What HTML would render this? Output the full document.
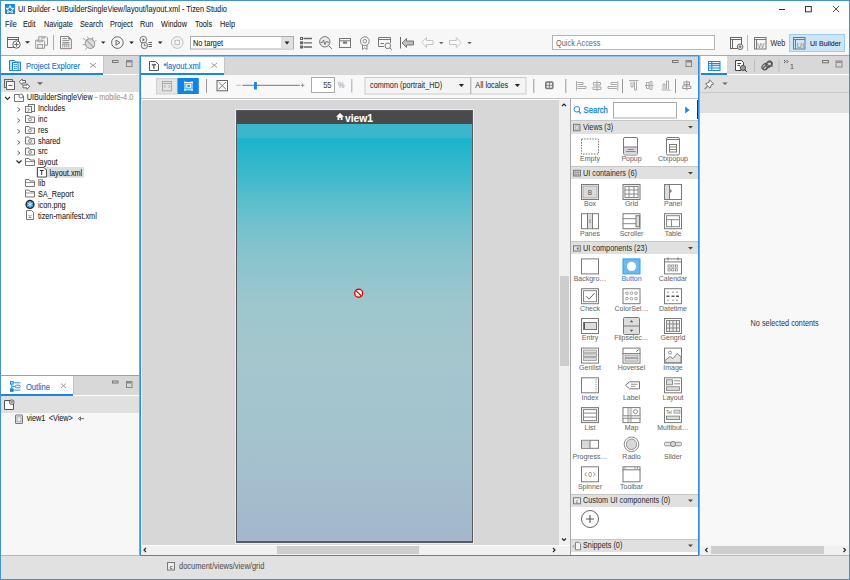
<!DOCTYPE html>
<html><head><meta charset="utf-8">
<style>
html,body{margin:0;padding:0;}
body{width:850px;height:580px;overflow:hidden;position:relative;background:#fff;font-family:"Liberation Sans",sans-serif;font-size:7.3px;color:#222;}
.a{position:absolute;}
.t{position:absolute;white-space:nowrap;line-height:1;z-index:5;-webkit-text-stroke:0.06px currentColor;transform:scaleY(1.14);transform-origin:0 84.6%;}
svg{position:absolute;overflow:visible;}
</style></head><body>
<!-- window border -->
<div class="a" style="left:0;top:0;width:850px;height:580px;box-sizing:border-box;border:1px solid #4592d3;z-index:50;pointer-events:none"></div>

<!-- title bar -->
<svg style="left:0;top:0" width="850" height="56">
<rect x="5" y="4" width="10" height="10" fill="#1e88e5"/>
<path d="M10 5.6 L11.1 8.3 L13.9 8.4 L11.7 10.2 L12.5 12.8 L10 11.3 L7.5 12.8 L8.3 10.2 L6.1 8.4 L8.9 8.3 Z" fill="none" stroke="#fff" stroke-width="1"/>
<!-- window controls -->
<rect x="779" y="9" width="6" height="1" fill="#333"/>
<rect x="805.5" y="6.5" width="5.8" height="5.3" fill="none" stroke="#333" stroke-width="1"/>
<path d="M833 6 L839.2 12 M839.2 6 L833 12" stroke="#333" stroke-width="0.9"/>
<!-- toolbar icons -->
<g fill="none" stroke="#666" stroke-width="1">
 <rect x="7.5" y="37.5" width="11" height="10"/>
 <line x1="7.5" y1="39.5" x2="18.5" y2="39.5"/>
 <circle cx="16.5" cy="44.5" r="3.7" fill="#f7f7f7"/>
 <path d="M16.5 42.3 V46.7 M14.3 44.5 H18.7" stroke-width="0.9"/>
</g>
<path d="M25 41.2 H30 L27.5 43.6 Z" fill="#222"/>
<g fill="#f7f7f7" stroke="#999" stroke-width="1">
 <path d="M38.7 36.8 H46.5 L47.5 37.8 V45.3 H38.7 Z"/>
 <rect x="41" y="36.8" width="4.5" height="2" fill="#bbb" stroke="none"/>
 <path d="M35.7 40.2 H43.5 L44.6 41.3 V48.3 H35.7 Z" fill="#fafafa"/>
 <path d="M37.7 40.2 V41.8 H42.5 V40.2" fill="none"/>
 <rect x="37.7" y="44.5" width="5" height="3.8" fill="#eee"/>
</g>
<rect x="53" y="35" width="1" height="15" fill="#aaa"/>
<g fill="#fafafa" stroke="#808080" stroke-width="1">
 <path d="M60.5 36.5 H68.5 L71.3 39.3 V48.7 H60.5 Z"/>
 <path d="M68.3 36.5 V39.5 H71.3" fill="#777" stroke="none"/>
 <path d="M62.3 38.6 H67 M62.3 40.6 H69.5 M62.3 42.6 H69.5" stroke-width="0.9"/>
 <path d="M62.8 44 V47.5 M64.8 44.5 V47.5 M66.8 44.5 V47.5 M68.8 44 V47.5 M62.8 44 H68.8" stroke-width="0.9"/>
</g>
<g stroke="#9a9a9a" stroke-width="1" fill="none">
 <ellipse cx="90" cy="43.6" rx="4.6" ry="5" fill="#dcdcdc" transform="rotate(-35 90 43.6)"/>
 <path d="M86.5 40 L93.5 47.2" stroke="#888"/>
 <path d="M85.5 40 L83 38.3 M85 44.5 L82.5 44.8 M87 47.8 L85.3 49.8 M92.5 39 L93 37 M94.3 41.5 L96.5 40.5 M88.5 38.8 L87.5 36.5" stroke="#aaa"/>
</g>
<path d="M101 41.4 H105.5 L103.25 43.8 Z" fill="#222"/>
<g fill="none" stroke="#666" stroke-width="1">
 <circle cx="117.4" cy="42.6" r="5.8"/>
 <path d="M116 40 L120 42.6 L116 45.2 Z"/>
</g>
<path d="M129.2 41.4 H133.9 L131.55 43.9 Z" fill="#222"/>
<g fill="none" stroke="#777" stroke-width="1">
 <circle cx="143.3" cy="39.7" r="3.4" fill="#f7f7f7"/>
 <circle cx="144.4" cy="45.5" r="3.2" fill="#ececec"/>
 <path d="M148.5 42.5 H152 M148.5 44.5 H152 M148.5 46.5 H152" stroke="#666"/>
 <path d="M144.4 45.5 V43.5 M144.4 45.5 H146.2" stroke="#666" stroke-width="0.8"/>
</g>
<path d="M142.5 38 L145 39.7 L142.5 41.4 Z" fill="#666"/>
<path d="M157.9 41.4 H162.4 L160.15 43.9 Z" fill="#222"/>
<g fill="none" stroke="#bbb" stroke-width="1">
 <circle cx="177.2" cy="42.5" r="5.8"/>
 <rect x="175" y="40.3" width="4.4" height="4.4"/>
</g>
<!-- combo no target -->
<rect x="190.5" y="36.5" width="103" height="12.5" fill="#fff" stroke="#adadad"/>
<rect x="281" y="37" width="12" height="11.5" fill="#e1e1e1"/>
<path d="M284.5 41.5 H289.5 L287 44.5 Z" fill="#222"/>
<g fill="none" stroke="#666" stroke-width="1">
 <rect x="300.5" y="37.5" width="2" height="2"/><rect x="300.5" y="41.8" width="2" height="2"/><rect x="300.5" y="46" width="2" height="2"/>
</g>
<g fill="none" stroke="#666" stroke-width="1.3">
 <path d="M303.5 38.5 H312 M303.5 42.8 H312 M303.5 47 H312"/>
</g>
<g fill="none" stroke="#777" stroke-width="1">
 <circle cx="324.8" cy="41.8" r="5.2" fill="#eaeaea"/>
 <path d="M328.5 45.5 L332 49"/>
 <path d="M320.5 42.5 L322.5 42.5 L323.5 40 L325 44.5 L326.2 41.5 L329 42.5"/>
</g>
<g fill="none" stroke="#777" stroke-width="1">
 <rect x="339.5" y="38.5" width="11" height="9"/>
 <path d="M339.5 40.8 H350.5"/>
 <rect x="343.5" y="42" width="3" height="1.2" fill="#777"/>
</g>
<g fill="none" stroke="#888" stroke-width="1">
 <circle cx="364.8" cy="41.2" r="4.4"/>
 <circle cx="364.8" cy="41.2" r="1.8"/>
 <path d="M362.5 45 V49.5 L364.8 47.8 L367 49.5 V45"/>
</g>
<g fill="none" stroke="#777" stroke-width="1">
 <path d="M384 46.5 H378.5 V37.5 H390.5 V43"/>
 <path d="M378.5 39.5 H390.5 M380.5 43.5 H384"/>
 <circle cx="387.8" cy="45.8" r="2.8" fill="#f7f7f7"/>
 <path d="M389.8 47.8 L391.8 49.8"/>
</g>
<rect x="400" y="37" width="1" height="11.5" fill="#666"/>
<path d="M402 43 L406.5 38.5 V41 H413.5 V45 H406.5 V47.5 Z" fill="#bdbdbd" stroke="#777" stroke-width="1"/>
<path d="M421.8 42.5 L426.5 37.5 V40.5 H433 V44.5 H426.5 V47.5 Z" fill="#fafafa" stroke="#c4c4c4" stroke-width="1"/>
<path d="M439 42 H443.5 L441.25 44.2 Z" fill="#666"/>
<path d="M461 42.5 L456.3 37.5 V40.5 H449.5 V44.5 H456.3 V47.5 Z" fill="#fafafa" stroke="#c4c4c4" stroke-width="1"/>
<path d="M467.2 42 H471.8 L469.5 44.2 Z" fill="#666"/>
<!-- quick access -->
<rect x="552.5" y="35.5" width="162" height="14" fill="#fff" stroke="#b4b4b4"/>
<g fill="none" stroke="#666" stroke-width="1">
 <rect x="730.5" y="37.5" width="11" height="11"/>
 <path d="M730.5 39.5 H741.5 M732.5 39.5 V48.5"/>
 <circle cx="740.1" cy="46.8" r="2.8" fill="#f7f7f7"/>
 <path d="M740.1 45.2 V48.4 M738.5 46.8 H741.7"/>
</g>
<rect x="747" y="35" width="1" height="16" fill="#bbb"/>
<g fill="none" stroke="#777" stroke-width="1">
 <rect x="754.5" y="37.5" width="11.5" height="11.5"/>
 <path d="M754.5 39.5 H766 M756.5 39.5 V49"/>
</g>
<text x="757.3" y="48" font-family="Liberation Sans" font-size="7.6" fill="#888">W</text>
<rect x="789.5" y="34.5" width="55" height="17" fill="#cde6f7" stroke="#9fcdf0"/>
<g fill="none" stroke="#777" stroke-width="1">
 <rect x="793.5" y="37.5" width="11.5" height="11.5"/>
 <path d="M793.5 39.5 H805 M795.5 39.5 V49"/>
</g>
<text x="796.8" y="48" font-family="Liberation Sans" font-size="7.4" fill="#888">UI</text>
</svg>
<div class="t" style="left:18px;top:6.2px;font-size:7.35px;color:#222">UI Builder - UIBuilderSingleView/layout/layout.xml - Tizen Studio</div>

<!-- menu -->
<div class="t" style="left:5px;top:20.5px">File</div>
<div class="t" style="left:23px;top:20.5px">Edit</div>
<div class="t" style="left:44px;top:20.5px">Navigate</div>
<div class="t" style="left:80px;top:20.5px">Search</div>
<div class="t" style="left:110px;top:20.5px">Project</div>
<div class="t" style="left:140px;top:20.5px">Run</div>
<div class="t" style="left:161px;top:20.5px">Window</div>
<div class="t" style="left:195px;top:20.5px">Tools</div>
<div class="t" style="left:220px;top:20.5px">Help</div>

<!-- toolbar -->
<div class="a" style="left:1px;top:29px;width:848px;height:26px;background:#f7f7f7;z-index:-1"></div>
<div class="a" style="left:1px;top:55px;width:848px;height:1px;background:#a9a9a9"></div>
<div class="t" style="left:193px;top:39.5px;color:#222">No target</div>
<div class="t" style="left:556px;top:39.5px;font-size:7.4px;color:#666;-webkit-text-stroke:0">Quick Access</div>
<div class="t" style="left:770.5px;top:40px;font-size:7.2px;color:#333;-webkit-text-stroke:0.05px #333">Web</div>
<div class="t" style="left:810px;top:40px;font-size:7.05px;color:#222244;-webkit-text-stroke:0.1px #224">UI Builder</div>

<!-- left panel: project explorer -->
<div class="a" style="left:1px;top:56px;width:138px;height:18px;background:#d8d8d8"></div>
<div class="a" style="left:1px;top:56px;width:102px;height:18px;background:#fff"></div>
<div class="a" style="left:1px;top:73px;width:102px;height:2px;background:#1a86dc"></div>
<div class="a" style="left:1px;top:75px;width:138px;height:17px;background:#e0e0e0"></div>
<div class="a" style="left:1px;top:92px;width:138px;height:283px;background:#fff"></div>
<div class="a" style="left:139px;top:56px;width:1px;height:499px;background:#a0a0a0"></div>
<div class="a" style="left:1px;top:375px;width:138px;height:1px;background:#a0a0a0"></div>

<!-- explorer details -->
<svg style="left:0;top:0;z-index:2" width="140" height="556">
<g fill="#fff" stroke="#1a86dc" stroke-width="1">
 <path d="M9.5 60.5 H14.5 L15.5 62 H20.5 V70.5 H9.5 Z" fill="#bcdcf7"/>
 <path d="M12.5 62.5 H18 V70.5 H12.5 Z" fill="#fff"/>
 <path d="M13.5 64.5 H17 M13.5 66.5 H17 M13.5 68.5 H17" stroke-width="0.8"/>
</g>
<path d="M90 63 L96 67.5 M96 63 L90 67.5" stroke="#999" stroke-width="1"/>
<rect x="112.5" y="60.5" width="5.5" height="2" fill="none" stroke="#777" stroke-width="1"/>
<rect x="126.5" y="60.5" width="5.5" height="6" fill="none" stroke="#888" stroke-width="1"/>
<rect x="127" y="61" width="4.5" height="1.5" fill="#888"/>
<g fill="none" stroke="#666" stroke-width="1">
 <rect x="4.5" y="79.5" width="8" height="8" fill="#e0e0e0"/>
 <rect x="6.5" y="81.5" width="8" height="8" fill="#fafafa"/>
 <path d="M8.5 85.5 H12.5"/>
 <path d="M19.2 81.8 L22.2 79 V80.5 H25.5 V83 H22.2 V84.6 Z" fill="#fff" stroke="#666"/>
 <path d="M29.8 86.5 L26.8 83.7 V85.2 H23 V87.8 H26.8 V89.3 Z" fill="#fff" stroke="#666"/>
</g>
<path d="M37 82.3 H43 L40 85 Z" fill="#666"/>
<!-- tree -->
<path d="M5 96.8 L7.5 99.3 L10 96.8" fill="none" stroke="#222" stroke-width="1.2"/>
<g fill="none" stroke="#777" stroke-width="1">
 <path d="M14.5 94.5 H19 L20 96 H23.5 V101.5 H14.5 Z"/>
 <circle cx="21" cy="96" r="2" fill="#fff"/>
</g>
<g fill="none" stroke="#555" stroke-width="0.9">
 <path d="M17.5 107.5 L20 109.5 L17.5 111.5"/>
 <path d="M17.5 118.5 L20 120.5 L17.5 122.5"/>
 <path d="M17.5 129.5 L20 131.5 L17.5 133.5"/>
 <path d="M17.5 140.5 L20 142.5 L17.5 144.5"/>
 <path d="M17.5 151 L20 153 L17.5 155"/>
 <path d="M16.5 160.5 L19 163 L21.5 160.5" stroke="#222" stroke-width="1.2"/>
</g>
<g fill="#f4f4f4" stroke="#777" stroke-width="1">
 <rect x="28.5" y="104.5" width="6" height="7"/>
 <rect x="25.5" y="106.5" width="6" height="6" fill="#fff"/>
 <path d="M27.5 108 L29.5 110 L27.5 111.5" fill="none"/>
 <path d="M25.5 115.5 H29 L30 117 H34.5 V122.5 H25.5 Z"/>
 <path d="M25.5 126.5 H29 L30 128 H34.5 V133.5 H25.5 Z"/>
 <path d="M25.5 137 H29 L30 138.5 H34.5 V144 H25.5 Z"/>
 <path d="M25.5 148 H29 L30 149.5 H34.5 V155 H25.5 Z"/>
 <path d="M25.5 158.5 H29 L30 160 H34.5 V165.5 H25.5 Z" fill="#fff"/>
 <path d="M25.5 179.5 H29 L30 181 H34.5 V186.5 H25.5 Z" fill="#fff"/>
 <path d="M25.5 190 H29 L30 191.5 H34.5 V197 H25.5 Z" fill="#fff"/>
 <path d="M26.5 210.5 H31.5 L33.5 212.5 V219.5 H26.5 Z" fill="#fff"/>
</g>
<g fill="none" stroke="#777" stroke-width="0.8">
 <circle cx="30" cy="119.5" r="1.5"/><circle cx="30" cy="130.5" r="1.5"/><circle cx="30" cy="141" r="1.5"/><circle cx="30" cy="152" r="1.5"/>
 <path d="M25.5 161.5 H34.5 M25.5 182.5 H34.5 M25.5 193 H34.5"/>
 <path d="M28.5 215 L30 216.5 L31.5 215 M28.5 217.5 H31.5"/>
</g>
<rect x="36" y="167" width="48" height="10.7" fill="#dedede"/>
<g fill="#fff" stroke="#555" stroke-width="1">
 <path d="M37.5 167.5 H44 L46.5 170 V177 H37.5 Z"/>
 <path d="M39.8 170.5 H43.6 M41.7 170.5 V175" stroke="#333"/>
</g>
<circle cx="30" cy="204.4" r="4.6" fill="#222"/>
<circle cx="30" cy="204.4" r="3.3" fill="#2c8ccf"/>
<path d="M30 201.5 V207.3 M27.5 203 L32.5 205.8 M27.5 205.8 L32.5 203" stroke="#fff" stroke-width="0.8"/>
<!-- outline tab -->
<g fill="none" stroke="#1a86dc" stroke-width="0.9">
 <rect x="10.5" y="381.5" width="2.6" height="2.6" fill="#bcdcf7"/>
 <rect x="10.5" y="388.8" width="2.6" height="2.6" fill="#1a86dc"/>
 <path d="M11.8 384.1 V388.8 M13.1 382.8 H20.5 M13.1 390.1 H20.5 M11.8 386.5 H15"/>
 <rect x="15.3" y="385.2" width="5" height="2.6" rx="1.2"/>
</g>
<path d="M61 383.5 L66 388 M66 383.5 L61 388" stroke="#999" stroke-width="1"/>
<rect x="112.5" y="381" width="5.5" height="2" fill="none" stroke="#777" stroke-width="1"/>
<rect x="126.5" y="381.5" width="5.5" height="6" fill="none" stroke="#888" stroke-width="1"/>
<rect x="127" y="382" width="4.5" height="1.5" fill="#888"/>
<g fill="#fff" stroke="#555" stroke-width="1">
 <path d="M4.5 400.5 H10 M13.5 403.5 V409.5 H4.5 V400.5"/>
 <circle cx="11.8" cy="402.2" r="2.3" fill="#fff"/>
 <path d="M11.8 400.9 V403.5 M10.5 402.2 H13.1" stroke-width="0.7"/>
</g>
<g fill="#eee" stroke="#777" stroke-width="1">
 <rect x="15.5" y="415" width="7" height="8.5" rx="0.5"/>
 <rect x="17" y="416.8" width="4" height="5" fill="none" stroke="#aaa"/>
</g>
<path d="M80.5 416.8 L78.3 418.6 L80.5 420.4 Z M80.5 418.6 H84" fill="none" stroke="#555" stroke-width="0.8"/>
</svg>
<div class="t" style="left:26px;top:63.1px;font-size:7.6px;color:#1277d4;-webkit-text-stroke:0.12px #1277d4">Project Explorer</div>
<div class="t" style="left:26.7px;top:94.4px">UIBuilderSingleView<span style="color:#b09060"> - mobile-4.0</span></div>
<div class="t" style="left:38px;top:105.4px">Includes</div>
<div class="t" style="left:38px;top:116.2px">inc</div>
<div class="t" style="left:38px;top:126.9px">res</div>
<div class="t" style="left:38px;top:137.6px">shared</div>
<div class="t" style="left:38px;top:148.3px">src</div>
<div class="t" style="left:38px;top:159px">layout</div>
<div class="t" style="left:49.4px;top:169.7px">layout.xml</div>
<div class="t" style="left:38px;top:180.4px">lib</div>
<div class="t" style="left:38px;top:191.1px">SA_Report</div>
<div class="t" style="left:38px;top:201.8px">icon.png</div>
<div class="t" style="left:38px;top:212.5px">tizen-manifest.xml</div>
<div class="t" style="left:25.9px;top:384.1px;font-size:7.6px;color:#1277d4;-webkit-text-stroke:0.12px #1277d4">Outline</div>
<div class="t" style="left:26.7px;top:414.6px">view1<span style="margin-left:3.3px">&lt;View&gt;</span></div>

<!-- outline -->
<div class="a" style="left:1px;top:376px;width:138px;height:19px;background:#d8d8d8"></div>
<div class="a" style="left:1px;top:376px;width:72px;height:19px;background:#fff"></div>
<div class="a" style="left:1px;top:394px;width:72px;height:2px;background:#1a86dc"></div>
<div class="a" style="left:1px;top:396px;width:138px;height:17px;background:#e0e0e0"></div>
<div class="a" style="left:1px;top:413px;width:138px;height:142px;background:#f7f7f7"></div>

<!-- editor -->
<div class="a" style="left:140px;top:55px;width:559px;height:501px;box-sizing:border-box;border:1px solid #2a8fe0;background:#d7d7d7"></div>
<div class="a" style="left:141px;top:56px;width:557px;height:18px;background:#d8d8d8"></div>
<div class="a" style="left:141px;top:56px;width:83px;height:18px;background:#fff"></div>
<div class="a" style="left:141px;top:73px;width:83px;height:2px;background:#1a86dc"></div>
<div class="a" style="left:141px;top:75px;width:557px;height:23px;background:#f8f8f8"></div>
<div class="a" style="left:141px;top:98px;width:557px;height:1px;background:#c4c4c4"></div>
<div class="a" style="left:141px;top:99px;width:557px;height:1px;background:#fff"></div>
<div class="a" style="left:140px;top:55px;width:559px;height:1px;background:#5f8db0"></div>
<div class="a" style="left:141px;top:56px;width:557px;height:1px;background:#8ac2ee"></div>
<div class="a" style="left:224px;top:57px;width:1px;height:16px;background:#c4c4c4"></div>
<div class="a" style="left:103px;top:56px;width:1px;height:17px;background:#c4c4c4"></div>
<div class="a" style="left:73px;top:376px;width:1px;height:18px;background:#c4c4c4"></div>
<div class="a" style="left:727px;top:56px;width:1px;height:17px;background:#c4c4c4"></div>
<!-- canvas scrollbars -->
<div class="a" style="left:141px;top:99px;width:1px;height:446px;background:#fafafa"></div>
<div class="a" style="left:559px;top:100px;width:11px;height:446px;background:#f0f0f0"></div>
<div class="a" style="left:560px;top:276px;width:9px;height:90px;background:#cdcdcd"></div>
<div class="a" style="left:141px;top:545px;width:429px;height:10px;background:#f0f0f0;border-top:1px solid #fff;box-sizing:border-box"></div>
<div class="a" style="left:277px;top:546px;width:142px;height:8px;background:#cdcdcd"></div>

<!-- phone -->
<div class="a" style="left:235px;top:109px;width:239px;height:435px;background:#ececec"></div>
<div class="a" style="left:236px;top:110px;width:237px;height:433px;background:#575a60"></div>
<div class="a" style="left:237px;top:111px;width:235px;height:13px;background:#4a4a4a"></div>
<div class="a" style="left:237px;top:124px;width:235px;height:417px;background:linear-gradient(#1bb4cc 0px,#1bb4cc 16px,#3db9cc 51px,#5fbfcc 81px,#78c2cd 109px,#88c4cd 131px,#9ec6cd 181px,#a5c6cd 236px,#a4c4cd 301px,#a4becd 361px,#a4b8cc 411px,#a4b7cc 417px)"></div>
<div class="a" style="left:237px;top:124px;width:235px;height:14px;background:#3cb6cc"></div>

<!-- editor details -->
<svg style="left:0;top:0;z-index:2" width="850" height="580">
<g fill="#fff" stroke="#555" stroke-width="1">
 <path d="M149.5 61.5 H155.5 L158.5 64.5 V70.5 H149.5 Z"/>
 <path d="M151.8 64.8 H156 M153.9 64.8 V69" stroke="#333"/>
</g>
<path d="M211.5 63 L217 67.5 M217 63 L211.5 67.5" stroke="#999" stroke-width="1"/>
<rect x="672.5" y="60.5" width="5.5" height="2" fill="none" stroke="#777" stroke-width="1"/>
<rect x="686" y="60.5" width="5.5" height="6" fill="none" stroke="#888" stroke-width="1"/>
<rect x="686.5" y="61" width="4.5" height="1.5" fill="#888"/>
<!-- toggles -->
<rect x="156.5" y="78.5" width="21" height="15.5" fill="#e4e4e4" stroke="#d0d0d0"/>
<rect x="177.5" y="78" width="21.3" height="16" fill="#0f84e4"/>
<g fill="none" stroke="#aaa" stroke-width="1">
 <rect x="162.5" y="81.5" width="9" height="9.3"/>
 <path d="M162.5 83.5 H171.5 M165.5 85 L164 86.5 L165.5 88 M168.5 85 L170 86.5 L168.5 88"/>
</g>
<g fill="none" stroke="#fff" stroke-width="1">
 <path d="M184 82.5 H193 M184 89.8 H193 M185 81.2 V91 M192 81.2 V91"/>
 <rect x="186.8" y="84.2" width="3.6" height="3.6" stroke-width="1.2"/>
</g>
<rect x="206" y="79" width="1" height="14" fill="#999"/>
<g fill="none" stroke="#666" stroke-width="1">
 <rect x="217" y="80.5" width="10.5" height="10.3"/>
 <path d="M218.5 82 L226 89.3 M226 82 L218.5 89.3" stroke-width="0.8"/>
</g>
<rect x="236.3" y="84.8" width="4.3" height="1" fill="#bbb"/>
<rect x="242.3" y="84.8" width="57.5" height="1" fill="#777"/>
<path d="M300.8 85.3 H304.4 M302.6 83.5 V87.1" stroke="#888" stroke-width="0.9"/>
<rect x="254" y="82" width="2.9" height="7.5" fill="#1a86e0" rx="0.5"/>
<rect x="311.5" y="77.5" width="23" height="15" fill="#fff" stroke="#aaa"/>
<rect x="351.3" y="79" width="1" height="13.5" fill="#aaa"/>
<rect x="365" y="77.5" width="161" height="16.5" fill="#f4f4f4" stroke="#cccccc"/>
<rect x="470.3" y="77.5" width="1" height="16.5" fill="#aaa"/>
<path d="M458.8 84 H464 L461.4 87 Z" fill="#222"/>
<path d="M514.8 84 H520 L517.4 87 Z" fill="#222"/>
<rect x="533.3" y="79" width="1" height="14" fill="#999"/>
<rect x="545" y="81.2" width="8.6" height="8" fill="#777" rx="1.8"/>
<rect x="546.6" y="82.8" width="2.3" height="2.1" fill="#e8e8e8"/><rect x="549.8" y="82.8" width="2.3" height="2.1" fill="#e8e8e8"/>
<rect x="546.6" y="85.7" width="2.3" height="2.1" fill="#e8e8e8"/><rect x="549.8" y="85.7" width="2.3" height="2.1" fill="#e8e8e8"/>
<rect x="565.3" y="79" width="1" height="14" fill="#999"/>
<g fill="none" stroke="#aaa" stroke-width="1">
 <path d="M576.5 81 V90.5 M577.5 82.5 H583 V84.5 H577.5 M577.5 86.5 H586 V88.5 H577.5"/>
 <path d="M597 80.5 V91 M593.5 82.5 H600.5 V85 H593.5 Z M593 87 H601 V89.5 H593 Z"/>
 <path d="M617.8 81 V90.5 M616.8 82.5 H611 V84.5 H616.8 M616.8 86.5 H608 V88.5 H616.8"/>
</g>
<rect x="622" y="79" width="1" height="14" fill="#999"/>
<g fill="none" stroke="#aaa" stroke-width="1">
 <path d="M629 80.5 H638.5 M631 81.5 V87 H633 V81.5 M634.5 81.5 V90 H636.5 V81.5"/>
 <path d="M645 85.5 H653.5 M646.5 82.5 H649 V88.5 H646.5 Z M650 81.5 H652 V89.5 H650 Z"/>
 <path d="M661.5 90 H670.5 M663 89 V84 H665 V89 M666.5 89 V81 H668.5 V89"/>
</g>
<rect x="675" y="79" width="1" height="14" fill="#999"/>
<g fill="none" stroke="#999" stroke-width="1">
 <path d="M686.8 80.5 V90.5"/>
 <rect x="684" y="82" width="5.5" height="2.5"/>
 <rect x="682.8" y="86" width="8" height="2.5"/>
</g>
<!-- canvas scroll arrows -->
<path d="M562 106 L564 104 L566 106" fill="none" stroke="#222" stroke-width="1.1"/>
<path d="M562 538.5 L564 540.5 L566 538.5" fill="none" stroke="#222" stroke-width="1.1"/>
<path d="M146 548 L144 550 L146 552" fill="none" stroke="#222" stroke-width="1.1"/>
<path d="M553 548 L555 550 L553 552" fill="none" stroke="#222" stroke-width="1.1"/>
<!-- phone header icon -->
<path d="M340 113 L336 116.8 H337.5 V120 H339.3 V118 H340.7 V120 H342.5 V116.8 H344 Z" fill="#fff"/>
<!-- block icon -->
<circle cx="358.7" cy="293.3" r="4" fill="#fff" stroke="#e00" stroke-width="1.4"/>
<path d="M356 290.6 L361.4 296" stroke="#e00" stroke-width="1.2"/>
<!-- search row -->
<circle cx="576.8" cy="109.3" r="2.8" fill="none" stroke="#1a86dc" stroke-width="1"/>
<path d="M578.8 111.3 L581 113.5" stroke="#1a86dc" stroke-width="1.1"/>
<rect x="613.5" y="102.5" width="63" height="15.5" fill="#fff" stroke="#aaa"/>
<path d="M685.2 106.5 L689.6 110 L685.2 113.5 Z" fill="#1a86dc"/>
<rect x="697" y="100" width="1" height="19" fill="#334"/>
</svg>
<div class="t" style="left:163.4px;top:63.2px;font-size:7.6px;color:#1277d4;-webkit-text-stroke:0.12px #1277d4">*layout.xml</div>
<div class="t" style="left:311px;width:20.5px;text-align:right;top:82px;font-size:7.5px;color:#444">55</div>
<div class="t" style="left:338px;top:82px;font-size:7.3px;color:#999">%</div>
<div class="t" style="left:370px;top:82px;font-size:7.3px;color:#333">common (portrait_HD)</div>
<div class="t" style="left:475.3px;top:82px;font-size:7.3px;color:#333">All locales</div>
<div class="t" style="left:345px;top:114px;font-size:10.3px;font-weight:bold;color:#fff">view1</div>
<div class="t" style="left:583.5px;top:106.5px;font-size:7.7px;color:#1a86dc;-webkit-text-stroke:0.25px #1a86dc">Search</div>

<!-- palette -->
<div class="a" style="left:570px;top:99px;width:1px;height:456px;background:#a8a8a8"></div>
<div class="a" style="left:571px;top:100px;width:127px;height:455px;background:#fff"></div>
<!--PALETTE_HDR-->
<div class="a" style="left:571px;top:120px;width:127px;height:1px;background:#c6c6c6"></div>
<div class="a" style="left:571px;top:121px;width:127px;height:13px;background:#e0e0e0"></div>
<div class="a" style="left:571px;top:166px;width:127px;height:1px;background:#c6c6c6"></div>
<div class="a" style="left:571px;top:167px;width:127px;height:12px;background:#e0e0e0"></div>
<div class="a" style="left:571px;top:241px;width:127px;height:1px;background:#c6c6c6"></div>
<div class="a" style="left:571px;top:242px;width:127px;height:12px;background:#e0e0e0"></div>
<div class="a" style="left:571px;top:493.5px;width:127px;height:1px;background:#c6c6c6"></div>
<div class="a" style="left:571px;top:494.5px;width:127px;height:12px;background:#e0e0e0"></div>
<div class="a" style="left:571px;top:538.5px;width:127px;height:1px;background:#c6c6c6"></div>
<div class="a" style="left:571px;top:539.5px;width:127px;height:12px;background:#e0e0e0"></div>
<!--/PALETTE_HDR-->
<svg style="left:0;top:0;z-index:2" width="850" height="580">
<!--PALETTE_SVG-->
<rect x="581.5" y="139.0" width="17.0" height="15.0" fill="none" stroke="#777" stroke-width="1" stroke-dasharray="1.5 1.2"/>
<rect x="623.5" y="137.5" width="14.0" height="17.5" fill="none" stroke="#7a7a7a" stroke-width="1" rx="1.5"/>
<rect x="624.0" y="147.0" width="13" height="7.5" fill="#d8d8d8"/>
<path d="M623.5 147.0 H638.0" fill="none" stroke="#7a7a7a" stroke-width="1" />
<path d="M627.5 149.5 H633.5 M626.0 151.5 H635.5" fill="none" stroke="#888" stroke-width="1" />
<rect x="666.5" y="137.5" width="13.0" height="17.5" fill="none" stroke="#7a7a7a" stroke-width="1" rx="1.5"/>
<path d="M666.5 139.5 H679.5" fill="none" stroke="#7a7a7a" stroke-width="1" />
<rect x="669.5" y="144.5" width="7.0" height="7.5" fill="none" stroke="#7a7a7a" stroke-width="1" />
<path d="M669.5 147.0 H676.5 M669.5 149.5 H676.5" fill="none" stroke="#888" stroke-width="1" />
<rect x="581.5" y="184.5" width="17.0" height="15.0" fill="none" stroke="#7a7a7a" stroke-width="1" />
<rect x="583.0" y="186.0" width="14" height="12" fill="#dadada" stroke="#999" stroke-width="0.8"/>
<text x="590" y="194.5" text-anchor="middle" font-family="Liberation Sans" font-size="6.5" fill="#555">B</text>
<rect x="623.0" y="184.5" width="17.0" height="15.0" fill="#eee" stroke="#7a7a7a" stroke-width="1" />
<rect x="625.0" y="186.5" width="13.0" height="11.0" fill="#fff" stroke="#888" stroke-width="1" />
<path d="M624.5 190.0 H638.5 M624.5 194.0 H638.5 M629.0 186.0 V198.0 M634.0 186.0 V198.0" fill="none" stroke="#888" stroke-width="1" />
<rect x="664.5" y="184.5" width="17.0" height="15.0" fill="none" stroke="#7a7a7a" stroke-width="1" />
<rect x="665.0" y="185.0" width="4" height="14" fill="#ddd"/>
<path d="M669.5 184.0 V200.0" fill="none" stroke="#7a7a7a" stroke-width="1" />
<path d="M669.5 189.0 L671.5 191.0 L669.5 193.0" fill="#888" stroke="#7a7a7a" stroke-width="1" />
<rect x="581.5" y="213.7" width="17.0" height="15.0" fill="none" stroke="#7a7a7a" stroke-width="1" />
<rect x="588.0" y="214.2" width="4" height="14" fill="#ddd"/>
<path d="M587.5 213.2 V229.2 M592.5 213.2 V229.2" fill="none" stroke="#7a7a7a" stroke-width="1" />
<path d="M589.0 220.2 H591.0 M589.0 222.2 H591.0" fill="none" stroke="#888" stroke-width="1" />
<rect x="623.0" y="213.7" width="17.0" height="15.0" fill="none" stroke="#7a7a7a" stroke-width="1" />
<path d="M622.5 218.7 H636.5 M622.5 223.7 H636.5" fill="none" stroke="#888" stroke-width="1" />
<rect x="636.0" y="215.7" width="3.5" height="11.0" fill="#ddd" stroke="#7a7a7a" stroke-width="1" />
<rect x="664.5" y="213.7" width="17.0" height="15.0" fill="none" stroke="#7a7a7a" stroke-width="1" />
<rect x="666.5" y="215.7" width="13.0" height="11.0" fill="none" stroke="#888" stroke-width="1" />
<path d="M666.0 219.7 H680.0 M671.5 219.7 V227.2" fill="none" stroke="#888" stroke-width="1" />
<rect x="581.5" y="258.9" width="17.0" height="15.0" fill="none" stroke="#7a7a7a" stroke-width="1" />
<rect x="623.0" y="258.9" width="17.0" height="15.0" fill="#6bb8f2" stroke="#3b9be6" stroke-width="1" />
<circle cx="631.5" cy="266.4" r="4.6" fill="#fff"/>
<rect x="664.5" y="258.9" width="17.0" height="15.0" fill="none" stroke="#7a7a7a" stroke-width="1" />
<path d="M664.0 261.9 H682.0" fill="none" stroke="#7a7a7a" stroke-width="1" />
<path d="M668.0 257.4 V260.4 M678.0 257.4 V260.4" fill="none" stroke="#7a7a7a" stroke-width="1" />
<rect x="668.0" y="264.9" width="2.2" height="2.2" fill="none" stroke="#777" stroke-width="0.7"/>
<rect x="668.0" y="268.7" width="2.2" height="2.2" fill="none" stroke="#777" stroke-width="0.7"/>
<rect x="671.7" y="264.9" width="2.2" height="2.2" fill="none" stroke="#777" stroke-width="0.7"/>
<rect x="671.7" y="268.7" width="2.2" height="2.2" fill="none" stroke="#777" stroke-width="0.7"/>
<rect x="675.4" y="264.9" width="2.2" height="2.2" fill="none" stroke="#777" stroke-width="0.7"/>
<rect x="675.4" y="268.7" width="2.2" height="2.2" fill="none" stroke="#777" stroke-width="0.7"/>
<rect x="581.5" y="288.7" width="17.0" height="15.0" fill="none" stroke="#7a7a7a" stroke-width="1" />
<rect x="583.5" y="290.7" width="13.0" height="11.0" fill="none" stroke="#888" stroke-width="1" />
<path d="M586.0 296.2 L589.0 299.2 L594.5 293.2" fill="none" stroke="#666" stroke-width="1" />
<rect x="623.0" y="288.7" width="17.0" height="15.0" fill="none" stroke="#7a7a7a" stroke-width="1" />
<circle cx="627.0" cy="293.2" r="1.3" fill="none" stroke="#777" stroke-width="0.7"/>
<circle cx="627.0" cy="298.7" r="1.3" fill="none" stroke="#777" stroke-width="0.7"/>
<circle cx="631.5" cy="293.2" r="1.3" fill="none" stroke="#777" stroke-width="0.7"/>
<circle cx="631.5" cy="298.7" r="1.3" fill="none" stroke="#777" stroke-width="0.7"/>
<circle cx="636.0" cy="293.2" r="1.3" fill="none" stroke="#777" stroke-width="0.7"/>
<circle cx="636.0" cy="298.7" r="1.3" fill="none" stroke="#777" stroke-width="0.7"/>
<rect x="664.5" y="288.7" width="17.0" height="15.0" fill="none" stroke="#7a7a7a" stroke-width="1" />
<path d="M667.0 292.2 H669.0 M672.0 292.2 H674.0 M676.0 292.2 H678.0 M667.0 300.2 H669.0 M672.0 300.2 H674.0 M676.0 300.2 H678.0" fill="none" stroke="#999" stroke-width="1" />
<path d="M666.5 296.2 H669.5 M671.5 296.2 H674.5 M676.0 296.2 H679.0" fill="none" stroke="#555" stroke-width="1.5" />
<rect x="581.5" y="318.5" width="17.0" height="15.0" fill="none" stroke="#7a7a7a" stroke-width="1" />
<rect x="583.5" y="322.5" width="13.0" height="7.0" fill="#ddd" stroke="#777" stroke-width="1" />
<path d="M584.5 323.0 V329.0" fill="none" stroke="#555" stroke-width="1" />
<rect x="623.5" y="317.5" width="16.0" height="17.0" fill="#ddd" stroke="#7a7a7a" stroke-width="1" rx="1"/>
<path d="M623.5 326.0 H639.5" fill="none" stroke="#7a7a7a" stroke-width="1" />
<path d="M630.2 322.0 H632.8 L631.5 320.5 Z M630.2 330.0 H632.8 L631.5 331.5 Z" fill="#555" stroke="#555" stroke-width="0.5" />
<rect x="664.5" y="318.5" width="17.0" height="15.0" fill="none" stroke="#7a7a7a" stroke-width="1" />
<rect x="666.5" y="320.5" width="13.0" height="11.0" fill="#eee" stroke="#888" stroke-width="1" />
<path d="M666.0 324.0 H680.0 M666.0 328.0 H680.0 M669.5 320.0 V332.0 M673.0 320.0 V332.0 M676.5 320.0 V332.0" fill="none" stroke="#888" stroke-width="1" />
<rect x="581.5" y="348.1" width="17.0" height="15.0" fill="none" stroke="#7a7a7a" stroke-width="1" />
<rect x="583.5" y="350.1" width="13" height="2.8" fill="#ddd" stroke="#888" stroke-width="0.7"/>
<rect x="583.5" y="353.9" width="13" height="2.8" fill="#ddd" stroke="#888" stroke-width="0.7"/>
<rect x="583.5" y="357.7" width="13" height="2.8" fill="#ddd" stroke="#888" stroke-width="0.7"/>
<rect x="623.0" y="348.1" width="17.0" height="15.0" fill="none" stroke="#7a7a7a" stroke-width="1" />
<path d="M622.5 353.6 H640.5" fill="none" stroke="#7a7a7a" stroke-width="1" />
<path d="M636.5 351.6 L638.5 349.6" fill="none" stroke="#555" stroke-width="1" />
<rect x="625.0" y="355.1" width="13" height="2.5" fill="#ddd" stroke="#888" stroke-width="0.7"/>
<rect x="625.0" y="358.6" width="13" height="2.5" fill="#ddd" stroke="#888" stroke-width="0.7"/>
<rect x="664.5" y="348.1" width="17.0" height="15.0" fill="none" stroke="#7a7a7a" stroke-width="1" />
<circle cx="670.0" cy="352.6" r="1.5" fill="none" stroke="#777" stroke-width="0.8"/>
<path d="M665.0 360.6 L670.0 356.6 L673.0 358.6 L677.0 353.6 L681.0 356.6 V362.6 H665.0 Z" fill="#e2e2e2" stroke="#888" stroke-width="1" />
<rect x="581.5" y="377.8" width="17.0" height="15.0" fill="none" stroke="#7a7a7a" stroke-width="1" />
<path d="M596.0 379.3 V391.3" fill="none" stroke="#777" stroke-width="1" stroke-dasharray="1 1.3"/>
<path d="M625.5 385.3 L629.5 381.8 H639.5 V388.8 H629.5 Z" fill="none" stroke="#777" stroke-width="1" />
<path d="M631.0 384.3 H637.5 M631.0 386.3 H635.5" fill="none" stroke="#999" stroke-width="1" />
<rect x="664.5" y="377.8" width="17.0" height="15.0" fill="none" stroke="#7a7a7a" stroke-width="1" />
<rect x="666.5" y="379.8" width="6" height="5" fill="#ddd" stroke="#777" stroke-width="0.8"/>
<path d="M674.0 380.8 H680.0 M674.0 383.8 H680.0" fill="none" stroke="#888" stroke-width="1" />
<rect x="666.5" y="386.8" width="13" height="3.5" fill="#ddd" stroke="#777" stroke-width="0.8"/>
<rect x="581.5" y="407.6" width="17.0" height="15.0" fill="#eee" stroke="#7a7a7a" stroke-width="1" />
<rect x="583.5" y="409.6" width="13.0" height="11.0" fill="#fff" stroke="#888" stroke-width="1" />
<path d="M583.0 413.1 H597.0 M583.0 417.1 H597.0" fill="none" stroke="#888" stroke-width="1" />
<rect x="623.0" y="407.6" width="17.0" height="15.0" fill="none" stroke="#7a7a7a" stroke-width="1" />
<rect x="628.5" y="408.1" width="2" height="14" fill="#ddd"/>
<rect x="623.5" y="416.1" width="16" height="2" fill="#ddd"/>
<path d="M628.0 407.1 V423.1 M631.0 407.1 V423.1 M622.5 415.6 H640.5 M622.5 418.6 H640.5" fill="none" stroke="#888" stroke-width="0.8" />
<circle cx="635.5" cy="411.6" r="2" fill="#fff" stroke="#777" stroke-width="0.8"/>
<rect x="664.5" y="407.6" width="17.0" height="15.0" fill="none" stroke="#7a7a7a" stroke-width="1" />
<text x="666.0" y="413.6" font-family="Liberation Sans" font-size="4.5" fill="#666">Tel</text>
<rect x="674.0" y="410.1" width="6" height="3" fill="#ddd" stroke="#888" stroke-width="0.7"/>
<rect x="666.5" y="416.1" width="13" height="3.5" fill="#ddd" stroke="#777" stroke-width="0.8"/>
<rect x="581.5" y="440.3" width="17" height="8" fill="#fff" stroke="#7a7a7a" stroke-width="1"/>
<rect x="582.0" y="440.8" width="8" height="7" fill="#d8d8d8"/>
<path d="M590.0 440.3 V448.3" fill="none" stroke="#7a7a7a" stroke-width="1" />
<circle cx="631.5" cy="444.3" r="7.3" fill="#fff" stroke="#7a7a7a" stroke-width="0.9"/>
<circle cx="631.5" cy="444.3" r="5.2" fill="#d8d8d8" stroke="#888" stroke-width="0.9"/>
<rect x="664.5" y="442.3" width="17" height="3.5" fill="#e6e6e6" stroke="#888" stroke-width="0.9" rx="1"/>
<circle cx="673" cy="444.0" r="2.5" fill="#ddd" stroke="#777" stroke-width="0.9"/>
<rect x="581.5" y="466.8" width="17.0" height="15.0" fill="none" stroke="#7a7a7a" stroke-width="1" />
<text x="590" y="476.8" text-anchor="middle" font-family="Liberation Sans" font-size="6.5" fill="#666">0</text>
<path d="M586.5 472.3 L585 474.3 L586.5 476.3 M593.5 472.3 L595 474.3 L593.5 476.3" fill="none" stroke="#777" stroke-width="0.8" />
<rect x="623.0" y="466.8" width="17.0" height="15.0" fill="none" stroke="#7a7a7a" stroke-width="1" />
<path d="M622.5 469.8 H640.5" fill="none" stroke="#7a7a7a" stroke-width="1" />
<path d="M624.5 468.1 H625.5 M634.5 468.1 H635.5 M637.0 468.1 H638.0" fill="none" stroke="#555" stroke-width="1" />
<rect x="573.5" y="124.3" width="6.5" height="6.5" fill="none" stroke="#777" stroke-width="1"/>
<rect x="575.3" y="125.8" width="3" height="3.5" fill="none" stroke="#aaa" stroke-width="0.8"/>
<path d="M688 126.0 H693 L690.5 128.6 Z" fill="#444"/>
<rect x="573.5" y="170.3" width="7" height="5.7" fill="none" stroke="#777" stroke-width="1"/>
<path d="M573.5 172.3 H580.5 M573.5 174.2 H580.5 M575.8 170.3 V176.0 M578.2 170.3 V176.0" stroke="#888" stroke-width="0.7"/>
<path d="M688 172.0 H693 L690.5 174.6 Z" fill="#444"/>
<rect x="573.5" y="245.8" width="6.8" height="5.3" fill="none" stroke="#777" stroke-width="1"/>
<rect x="576.8" y="247.5" width="2" height="2" fill="#777"/>
<path d="M688 247.0 H693 L690.5 249.6 Z" fill="#444"/>
<rect x="573.5" y="497.8" width="7" height="6" fill="#eee" stroke="#777" stroke-width="1"/>
<text x="577" y="503.0" text-anchor="middle" font-family="Liberation Sans" font-size="5" fill="#555">c</text>
<path d="M688 499.5 H693 L690.5 502.1 Z" fill="#444"/>
<path d="M575.5 542.3 H579 L580.5 543.8 V549.8 H575.5 Z" fill="#f4f4f4" stroke="#777" stroke-width="0.9"/>
<path d="M574.5 544.8 L573 546.3 L574.5 547.8" fill="none" stroke="#777" stroke-width="0.8"/>
<path d="M688 544.5 H693 L690.5 547.1 Z" fill="#444"/>
<circle cx="590" cy="519" r="8.5" fill="#fff" stroke="#666" stroke-width="1"/>
<path d="M590 515 V523 M586 519 H594" stroke="#555" stroke-width="1.1"/>
<!--/PALETTE_SVG-->
</svg>
<!--PALETTE_TXT-->
<div class="t" style="left:530px;width:120px;text-align:center;top:154.9px;font-size:7.0px;color:#6a6a6a;-webkit-text-stroke:0.05px #6a6a6a">Empty</div>
<div class="t" style="left:571.5px;width:120px;text-align:center;top:154.9px;font-size:7.0px;color:#6a6a6a;-webkit-text-stroke:0.05px #6a6a6a">Popup</div>
<div class="t" style="left:613px;width:120px;text-align:center;top:154.9px;font-size:7.0px;color:#6a6a6a;-webkit-text-stroke:0.05px #6a6a6a">Ctxpopup</div>
<div class="t" style="left:530px;width:120px;text-align:center;top:200.4px;font-size:7.0px;color:#6a6a6a;-webkit-text-stroke:0.05px #6a6a6a">Box</div>
<div class="t" style="left:571.5px;width:120px;text-align:center;top:200.4px;font-size:7.0px;color:#6a6a6a;-webkit-text-stroke:0.05px #6a6a6a">Grid</div>
<div class="t" style="left:613px;width:120px;text-align:center;top:200.4px;font-size:7.0px;color:#6a6a6a;-webkit-text-stroke:0.05px #6a6a6a">Panel</div>
<div class="t" style="left:530px;width:120px;text-align:center;top:229.6px;font-size:7.0px;color:#6a6a6a;-webkit-text-stroke:0.05px #6a6a6a">Panes</div>
<div class="t" style="left:571.5px;width:120px;text-align:center;top:229.6px;font-size:7.0px;color:#6a6a6a;-webkit-text-stroke:0.05px #6a6a6a">Scroller</div>
<div class="t" style="left:613px;width:120px;text-align:center;top:229.6px;font-size:7.0px;color:#6a6a6a;-webkit-text-stroke:0.05px #6a6a6a">Table</div>
<div class="t" style="left:530px;width:120px;text-align:center;top:274.8px;font-size:7.0px;color:#6a6a6a;-webkit-text-stroke:0.05px #6a6a6a">Backgro…</div>
<div class="t" style="left:571.5px;width:120px;text-align:center;top:274.8px;font-size:7.0px;color:#2a86d8;-webkit-text-stroke:0.05px #2a86d8">Button</div>
<div class="t" style="left:613px;width:120px;text-align:center;top:274.8px;font-size:7.0px;color:#6a6a6a;-webkit-text-stroke:0.05px #6a6a6a">Calendar</div>
<div class="t" style="left:530px;width:120px;text-align:center;top:304.6px;font-size:7.0px;color:#6a6a6a;-webkit-text-stroke:0.05px #6a6a6a">Check</div>
<div class="t" style="left:571.5px;width:120px;text-align:center;top:304.6px;font-size:7.0px;color:#6a6a6a;-webkit-text-stroke:0.05px #6a6a6a">ColorSel…</div>
<div class="t" style="left:613px;width:120px;text-align:center;top:304.6px;font-size:7.0px;color:#6a6a6a;-webkit-text-stroke:0.05px #6a6a6a">Datetime</div>
<div class="t" style="left:530px;width:120px;text-align:center;top:334.4px;font-size:7.0px;color:#6a6a6a;-webkit-text-stroke:0.05px #6a6a6a">Entry</div>
<div class="t" style="left:571.5px;width:120px;text-align:center;top:334.4px;font-size:7.0px;color:#6a6a6a;-webkit-text-stroke:0.05px #6a6a6a">Flipselec…</div>
<div class="t" style="left:613px;width:120px;text-align:center;top:334.4px;font-size:7.0px;color:#6a6a6a;-webkit-text-stroke:0.05px #6a6a6a">Gengrid</div>
<div class="t" style="left:530px;width:120px;text-align:center;top:364.0px;font-size:7.0px;color:#6a6a6a;-webkit-text-stroke:0.05px #6a6a6a">Genlist</div>
<div class="t" style="left:571.5px;width:120px;text-align:center;top:364.0px;font-size:7.0px;color:#6a6a6a;-webkit-text-stroke:0.05px #6a6a6a">Hoversel</div>
<div class="t" style="left:613px;width:120px;text-align:center;top:364.0px;font-size:7.0px;color:#6a6a6a;-webkit-text-stroke:0.05px #6a6a6a">Image</div>
<div class="t" style="left:530px;width:120px;text-align:center;top:393.7px;font-size:7.0px;color:#6a6a6a;-webkit-text-stroke:0.05px #6a6a6a">Index</div>
<div class="t" style="left:571.5px;width:120px;text-align:center;top:393.7px;font-size:7.0px;color:#6a6a6a;-webkit-text-stroke:0.05px #6a6a6a">Label</div>
<div class="t" style="left:613px;width:120px;text-align:center;top:393.7px;font-size:7.0px;color:#6a6a6a;-webkit-text-stroke:0.05px #6a6a6a">Layout</div>
<div class="t" style="left:530px;width:120px;text-align:center;top:423.5px;font-size:7.0px;color:#6a6a6a;-webkit-text-stroke:0.05px #6a6a6a">List</div>
<div class="t" style="left:571.5px;width:120px;text-align:center;top:423.5px;font-size:7.0px;color:#6a6a6a;-webkit-text-stroke:0.05px #6a6a6a">Map</div>
<div class="t" style="left:613px;width:120px;text-align:center;top:423.5px;font-size:7.0px;color:#6a6a6a;-webkit-text-stroke:0.05px #6a6a6a">Multibut…</div>
<div class="t" style="left:530px;width:120px;text-align:center;top:453.2px;font-size:7.0px;color:#6a6a6a;-webkit-text-stroke:0.05px #6a6a6a">Progress…</div>
<div class="t" style="left:571.5px;width:120px;text-align:center;top:453.2px;font-size:7.0px;color:#6a6a6a;-webkit-text-stroke:0.05px #6a6a6a">Radio</div>
<div class="t" style="left:613px;width:120px;text-align:center;top:453.2px;font-size:7.0px;color:#6a6a6a;-webkit-text-stroke:0.05px #6a6a6a">Slider</div>
<div class="t" style="left:530px;width:120px;text-align:center;top:482.7px;font-size:7.0px;color:#6a6a6a;-webkit-text-stroke:0.05px #6a6a6a">Spinner</div>
<div class="t" style="left:571.5px;width:120px;text-align:center;top:482.7px;font-size:7.0px;color:#6a6a6a;-webkit-text-stroke:0.05px #6a6a6a">Toolbar</div>
<div class="t" style="left:583px;top:123.6px;font-size:7.3px;color:#2a2a2a;-webkit-text-stroke:0">Views (3)</div>
<div class="t" style="left:583px;top:169.6px;font-size:7.3px;color:#2a2a2a;-webkit-text-stroke:0">UI containers (6)</div>
<div class="t" style="left:583px;top:244.6px;font-size:7.3px;color:#2a2a2a;-webkit-text-stroke:0">UI components (23)</div>
<div class="t" style="left:583px;top:497.1px;font-size:7.3px;color:#2a2a2a;-webkit-text-stroke:0">Custom UI components (0)</div>
<div class="t" style="left:583px;top:542.1px;font-size:7.3px;color:#2a2a2a;-webkit-text-stroke:0">Snippets (0)</div>
<!--/PALETTE_TXT-->

<!-- right panel -->
<div class="a" style="left:699px;top:56px;width:1px;height:499px;background:#a0a0a0"></div>
<div class="a" style="left:700px;top:56px;width:149px;height:18px;background:#d8d8d8"></div>
<div class="a" style="left:701px;top:56px;width:26px;height:18px;background:#fff"></div>
<div class="a" style="left:701px;top:73px;width:26px;height:2px;background:#1a86dc"></div>
<div class="a" style="left:700px;top:75px;width:149px;height:17px;background:#e0e0e0"></div>
<div class="a" style="left:700px;top:92px;width:149px;height:1px;background:#c8c8c8"></div>
<div class="a" style="left:700px;top:93px;width:149px;height:20px;background:#e0e0e0"></div>
<div class="a" style="left:700px;top:113px;width:149px;height:433px;background:#f8f8f8"></div>
<div class="a" style="left:700px;top:546px;width:149px;height:9px;background:#f0f0f0"></div>
<div class="a" style="left:711px;top:546px;width:113px;height:8px;background:#cdcdcd"></div>
<div class="t" style="left:750.6px;top:320px;font-size:7.3px;color:#333;-webkit-text-stroke:0">No selected contents</div>

<!-- right panel details -->
<svg style="left:0;top:0;z-index:2" width="850" height="580">
<rect x="712" y="63.8" width="8" height="2" fill="#b8dcf6"/>
<g fill="none" stroke="#1a86dc" stroke-width="1">
 <rect x="708.5" y="61.5" width="11.5" height="9"/>
 <path d="M711.8 61.5 V70.5 M708.5 63.5 H720 M708.5 65.7 H720 M708.5 68 H720"/>
</g>
<g fill="#fff" stroke="#444" stroke-width="1">
 <path d="M735.5 60.5 H741.5 L743.5 62.5 V69 M741 70.5 H735.5 V60.5"/>
 <path d="M737.5 63.5 H741 M737.5 65.5 H740"/>
 <circle cx="743" cy="68" r="2.6" fill="#999" stroke="#555"/>
 <path d="M744.8 69.8 L746.8 71.8" stroke="#222"/>
</g>
<rect x="754" y="59.5" width="1" height="12" fill="#bbb"/>
<g fill="none" stroke="#555" stroke-width="1.2">
 <path d="M762.8 68.5 L767 64.3 M765.5 70 L770.5 65 M767 62 L771.5 62.5 L772 67"/>
 <rect x="761.8" y="64.2" width="6.5" height="4.8" rx="2.2" transform="rotate(-45 765 66.6)"/>
 <rect x="765.8" y="61.8" width="6.5" height="4.8" rx="2.2" transform="rotate(-45 769 64.2)"/>
</g>
<rect x="778.5" y="59.5" width="1" height="12" fill="#bbb"/>
<path d="M784 60 L785.5 61.5 L784 63 M786.5 60 L788 61.5 L786.5 63" fill="none" stroke="#333" stroke-width="0.8"/>
<rect x="822.5" y="60.5" width="6" height="2.3" fill="none" stroke="#777" stroke-width="1"/>
<rect x="836" y="61" width="6" height="6" fill="none" stroke="#888" stroke-width="1"/>
<rect x="836.5" y="61.5" width="5" height="1.5" fill="#888"/>
<path d="M709.5 79.8 L713.8 84 L711.6 84.6 L710 88.2 L705.6 83.8 L709 82.3 Z" fill="#fafafa" stroke="#666" stroke-width="0.9"/>
<path d="M707.5 86.3 L704.6 89.2" stroke="#777" stroke-width="1.1"/>
<path d="M722.4 82.5 H727.6 L725 85 Z" fill="#666"/>
<path d="M707.5 548 L705.5 550 L707.5 552" fill="none" stroke="#222" stroke-width="1.1"/>
<path d="M843.5 548 L845.5 550 L843.5 552" fill="none" stroke="#222" stroke-width="1.1"/>
<!-- status icon -->
<rect x="167.5" y="562.5" width="7" height="7.5" fill="#eee" stroke="#777" stroke-width="1"/>
<text x="171" y="568.8" text-anchor="middle" font-family="Liberation Sans" font-size="5.5" font-weight="bold" fill="#555">c</text>
</svg>
<div class="t" style="left:790px;top:62.5px;font-size:7px;color:#555">1</div>

<!-- status bar -->
<div class="a" style="left:1px;top:555px;width:139px;height:1px;background:#b8b8b8"></div>
<div class="a" style="left:699px;top:555px;width:150px;height:1px;background:#b8b8b8"></div>
<div class="a" style="left:1px;top:556px;width:848px;height:23px;background:#e1e1e1"></div>
<div class="t" style="left:179px;top:563px;font-size:7.5px;color:#555">document/views/view/grid</div>
</body></html>
